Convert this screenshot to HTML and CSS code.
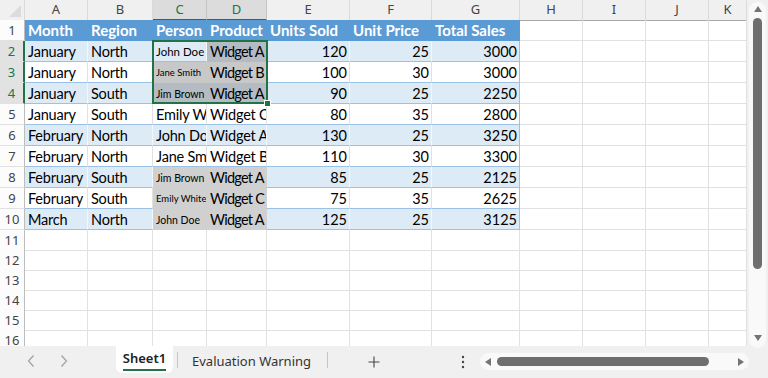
FILE: index.html
```html
<!DOCTYPE html>
<html lang="en">
<head>
    <meta charset="UTF-8">
    <meta name="viewport" content="width=device-width, initial-scale=1.0">
    <title>Sheet1</title>
    <link rel="stylesheet" href="styles.css">
</head>
<body>
    <div class="workbook">
        <div class="main">
            <div class="sheet">
                <div class="row colhead">
                    <div class="corner">
                        <svg width="24" height="19" viewBox="0 0 24 19"><polygon points="21,5 21,17 9,17" fill="#dcdcdc"/></svg>
                    </div>
                    <div class="ch">A</div>
                    <div class="ch">B</div>
                    <div class="ch on">C</div>
                    <div class="ch on">D</div>
                    <div class="ch">E</div>
                    <div class="ch">F</div>
                    <div class="ch">G</div>
                    <div class="ch">H</div>
                    <div class="ch">I</div>
                    <div class="ch">J</div>
                    <div class="ch">K</div>
                </div>

                <div class="row head">
                    <div class="rh">1</div>
                    <div class="cell t">Month</div>
                    <div class="cell t">Region</div>
                    <div class="cell t">Person</div>
                    <div class="cell t">Product</div>
                    <div class="cell t">Units Sold</div>
                    <div class="cell t">Unit Price</div>
                    <div class="cell t last">Total Sales</div>
                    <div class="cell"></div><div class="cell"></div><div class="cell"></div><div class="cell"></div>
                </div>

                <div class="row band">
                    <div class="rh on">2</div>
                    <div class="cell t">January</div>
                    <div class="cell t">North</div>
                    <div class="cell t fs12">John Doe</div>
                    <div class="cell t prod selb">Widget A</div>
                    <div class="cell t num">120</div>
                    <div class="cell t num">25</div>
                    <div class="cell t num last">3000</div>
                    <div class="cell"></div><div class="cell"></div><div class="cell"></div><div class="cell"></div>
                </div>

                <div class="row plain">
                    <div class="rh on">3</div>
                    <div class="cell t">January</div>
                    <div class="cell t">North</div>
                    <div class="cell t selg fs10">Jane Smith</div>
                    <div class="cell t prod selg">Widget B</div>
                    <div class="cell t num">100</div>
                    <div class="cell t num">30</div>
                    <div class="cell t num last">3000</div>
                    <div class="cell"></div><div class="cell"></div><div class="cell"></div><div class="cell"></div>
                </div>

                <div class="row band">
                    <div class="rh on">4</div>
                    <div class="cell t">January</div>
                    <div class="cell t">South</div>
                    <div class="cell t selb fs11">Jim Brown</div>
                    <div class="cell t prod selb">Widget A</div>
                    <div class="cell t num">90</div>
                    <div class="cell t num">25</div>
                    <div class="cell t num last">2250</div>
                    <div class="cell"></div><div class="cell"></div><div class="cell"></div><div class="cell"></div>
                </div>

                <div class="row plain">
                    <div class="rh">5</div>
                    <div class="cell t">January</div>
                    <div class="cell t">South</div>
                    <div class="cell t">Emily White</div>
                    <div class="cell t">Widget C</div>
                    <div class="cell t num">80</div>
                    <div class="cell t num">35</div>
                    <div class="cell t num last">2800</div>
                    <div class="cell"></div><div class="cell"></div><div class="cell"></div><div class="cell"></div>
                </div>

                <div class="row band">
                    <div class="rh">6</div>
                    <div class="cell t">February</div>
                    <div class="cell t">North</div>
                    <div class="cell t">John Doe</div>
                    <div class="cell t">Widget A</div>
                    <div class="cell t num">130</div>
                    <div class="cell t num">25</div>
                    <div class="cell t num last">3250</div>
                    <div class="cell"></div><div class="cell"></div><div class="cell"></div><div class="cell"></div>
                </div>

                <div class="row plain">
                    <div class="rh">7</div>
                    <div class="cell t">February</div>
                    <div class="cell t">North</div>
                    <div class="cell t">Jane Smith</div>
                    <div class="cell t">Widget B</div>
                    <div class="cell t num">110</div>
                    <div class="cell t num">30</div>
                    <div class="cell t num last">3300</div>
                    <div class="cell"></div><div class="cell"></div><div class="cell"></div><div class="cell"></div>
                </div>

                <div class="row band">
                    <div class="rh">8</div>
                    <div class="cell t">February</div>
                    <div class="cell t">South</div>
                    <div class="cell t gray fs11">Jim Brown</div>
                    <div class="cell t prod gray">Widget A</div>
                    <div class="cell t num">85</div>
                    <div class="cell t num">25</div>
                    <div class="cell t num last">2125</div>
                    <div class="cell"></div><div class="cell"></div><div class="cell"></div><div class="cell"></div>
                </div>

                <div class="row plain">
                    <div class="rh">9</div>
                    <div class="cell t">February</div>
                    <div class="cell t">South</div>
                    <div class="cell t gray fs10">Emily White</div>
                    <div class="cell t prod gray">Widget C</div>
                    <div class="cell t num">75</div>
                    <div class="cell t num">35</div>
                    <div class="cell t num last">2625</div>
                    <div class="cell"></div><div class="cell"></div><div class="cell"></div><div class="cell"></div>
                </div>

                <div class="row band">
                    <div class="rh">10</div>
                    <div class="cell t">March</div>
                    <div class="cell t">North</div>
                    <div class="cell t gray fs11">John Doe</div>
                    <div class="cell t prod gray">Widget A</div>
                    <div class="cell t num">125</div>
                    <div class="cell t num">25</div>
                    <div class="cell t num last">3125</div>
                    <div class="cell"></div><div class="cell"></div><div class="cell"></div><div class="cell"></div>
                </div>

                <div class="row empty">
                    <div class="rh">11</div>
                    <div class="cell"></div><div class="cell"></div><div class="cell"></div><div class="cell"></div><div class="cell"></div><div class="cell"></div><div class="cell"></div><div class="cell"></div><div class="cell"></div><div class="cell"></div><div class="cell"></div>
                </div>
                <div class="row empty">
                    <div class="rh">12</div>
                    <div class="cell"></div><div class="cell"></div><div class="cell"></div><div class="cell"></div><div class="cell"></div><div class="cell"></div><div class="cell"></div><div class="cell"></div><div class="cell"></div><div class="cell"></div><div class="cell"></div>
                </div>
                <div class="row empty">
                    <div class="rh">13</div>
                    <div class="cell"></div><div class="cell"></div><div class="cell"></div><div class="cell"></div><div class="cell"></div><div class="cell"></div><div class="cell"></div><div class="cell"></div><div class="cell"></div><div class="cell"></div><div class="cell"></div>
                </div>
                <div class="row empty">
                    <div class="rh">14</div>
                    <div class="cell"></div><div class="cell"></div><div class="cell"></div><div class="cell"></div><div class="cell"></div><div class="cell"></div><div class="cell"></div><div class="cell"></div><div class="cell"></div><div class="cell"></div><div class="cell"></div>
                </div>
                <div class="row empty">
                    <div class="rh">15</div>
                    <div class="cell"></div><div class="cell"></div><div class="cell"></div><div class="cell"></div><div class="cell"></div><div class="cell"></div><div class="cell"></div><div class="cell"></div><div class="cell"></div><div class="cell"></div><div class="cell"></div>
                </div>
                <div class="row empty">
                    <div class="rh">16</div>
                    <div class="cell"></div><div class="cell"></div><div class="cell"></div><div class="cell"></div><div class="cell"></div><div class="cell"></div><div class="cell"></div><div class="cell"></div><div class="cell"></div><div class="cell"></div><div class="cell"></div>
                </div>

                <!-- selected range C2:D4 -->
                <div class="selection"><span class="handle"></span></div>
            </div>

            <div class="vscroll">
                <div class="vtrack">
                    <span class="arrow up"></span>
                    <span class="vthumb"></span>
                    <span class="arrow down"></span>
                </div>
            </div>
        </div>

        <div class="tabbar">
            <div class="nav">
                <svg width="116" height="32" viewBox="0 0 116 32">
                    <polyline points="33.5,9.5 28.5,15 33.5,20.5" fill="none" stroke="#a0a0a0" stroke-width="1.2"/>
                    <polyline points="61.5,9.5 66.5,15 61.5,20.5" fill="none" stroke="#a0a0a0" stroke-width="1.2"/>
                </svg>
            </div>
            <div class="tab active"><span>Sheet1</span></div>
            <div class="sep"></div>
            <div class="tab">Evaluation Warning</div>
            <div class="sep"></div>
            <div class="add">
                <svg width="12" height="12" viewBox="0 0 12 12"><path d="M6 0.5V11.5M0.5 6H11.5" stroke="#444" stroke-width="1.1"/></svg>
            </div>
            <div class="more">
                <svg width="4" height="14" viewBox="0 0 4 14"><circle cx="2" cy="2" r="1.2" fill="#444"/><circle cx="2" cy="7" r="1.2" fill="#444"/><circle cx="2" cy="12" r="1.2" fill="#444"/></svg>
            </div>
            <div class="hscroll">
                <span class="arrow left"></span>
                <span class="hthumb"></span>
                <span class="arrow right"></span>
            </div>
        </div>
    </div>
</body>
</html>
```

FILE: styles.css
```css
body {
    margin: 0;
    background-color: #f0f0f0;
    overflow: hidden;
    font-family: 'Lato', sans-serif;
}
.workbook {
    width: 768px;
    height: 378px;
    display: flex;
    flex-direction: column;
}
.main {
    display: flex;
    height: 346px;
}
.sheet {
    position: relative;
    width: 747px;
    height: 346px;
    overflow: hidden;
    background-color: #fff;
}
.row {
    display: grid;
    grid-template-columns: 25px 63px 65px 54px 60px 83px 82px 88px 63px 63px 63px 38px;
    height: 21px;
}
.row.empty {
    height: 20px;
}
.row.colhead {
    height: 20px;
}
.corner {
    background-color: #f0f0f0;
    border-right: 1px solid #dadada;
    border-bottom: 1px solid #a9a9a9;
    box-sizing: border-box;
}
.corner svg {
    display: block;
}
.ch {
    background-color: #f0f0f0;
    border-right: 1px solid #dadada;
    border-bottom: 1px solid #a9a9a9;
    box-sizing: border-box;
    font-family: 'Noto Sans', sans-serif;
    font-size: 13px;
    line-height: 19px;
    text-align: center;
    color: #444;
}
.ch.on {
    background-color: #dcdcdc;
    color: #217346;
    border-bottom: 2px solid #217346;
    border-right-color: #c4c4c4;
}
.rh {
    background-color: #fcfcfc;
    border-right: 1px solid #bdbdbd;
    border-bottom: 1px solid #e1e1e1;
    box-sizing: border-box;
    font-family: 'Noto Sans', sans-serif;
    font-size: 13px;
    line-height: 20px;
    text-align: center;
    color: #444;
}
.rh.on {
    background-color: #e2e2e2;
    color: #217346;
    border-right: 2px solid #217346;
}
.cell {
    border-right: 1px solid #e1e1e1;
    border-bottom: 1px solid #e1e1e1;
    box-sizing: border-box;
    padding: 0 3px;
    overflow: hidden;
    white-space: nowrap;
    display: flex;
    align-items: flex-end;
    font-size: 14.5px;
    letter-spacing: -0.2px;
    line-height: 18px;
    color: #000;
}
.cell.num {
    justify-content: flex-end;
    padding-right: 2px;
    letter-spacing: 0;
}
.cell.prod {
    letter-spacing: -0.75px;
}
.head .t {
    background-color: #5b9bd5;
    border-color: #5b9bd5;
    color: #fff;
    font-weight: bold;
    font-size: 15px;
    letter-spacing: 0;
    padding-bottom: 1px;
}
.band .t {
    background-color: #ddebf7;
    border-right-color: #f2f7fc;
    border-bottom-color: #9bc2e6;
}
.plain .t {
    border-bottom-color: #9bc2e6;
}
.band .t.last, .plain .t.last {
    border-right-color: #9bc2e6;
}
.row .t.selb {
    background-color: #b5bbc3;
    border-color: #b5bbc3;
}
.row .t.selg {
    background-color: #c8c8c8;
    border-color: #c8c8c8;
}
.row .t.gray {
    background-color: #d0d0d0;
    border-color: #d0d0d0;
}
.cell.fs12 {
    font-size: 11.5px;
    letter-spacing: 0;
}
.cell.fs11 {
    font-size: 10.5px;
    letter-spacing: 0;
}
.cell.fs10 {
    font-size: 9.5px;
    letter-spacing: 0;
}
.selection {
    position: absolute;
    left: 152px;
    top: 40px;
    width: 116px;
    height: 64px;
    border: 2px solid #217346;
    box-sizing: border-box;
}
.handle {
    position: absolute;
    right: -5px;
    bottom: -5px;
    width: 5px;
    height: 5px;
    background-color: #217346;
    border: 1px solid #fff;
}
.vscroll {
    width: 21px;
    background-color: #f0f0f0;
}
.vtrack {
    margin: 2px 2px 0 2px;
    height: 346px;
    border-radius: 9px;
    background-color: #f9f9f9;
    display: flex;
    flex-direction: column;
    align-items: center;
    padding-top: 4px;
    box-sizing: border-box;
}
.arrow {
    width: 0;
    height: 0;
    border: 4px solid transparent;
}
.arrow.up {
    border-top: 0;
    border-bottom: 6px solid #747474;
    margin-bottom: 6px;
}
.arrow.down {
    border-bottom: 0;
    border-top: 6px solid #747474;
    margin-top: auto;
    margin-bottom: 7px;
}
.vthumb {
    width: 9px;
    height: 251px;
    border-radius: 5px;
    background-color: #6e6e6e;
}
.tabbar {
    height: 32px;
    display: flex;
    font-family: 'Noto Sans', sans-serif;
    font-size: 13px;
    color: #333;
}
.nav {
    width: 116px;
}
.nav svg {
    display: block;
}
.tab {
    width: 149px;
    padding-left: 14px;
    box-sizing: border-box;
    line-height: 31px;
}
.tab.active {
    width: 57px;
    height: 27px;
    padding: 3px 0 0;
    background-color: #fff;
    border-radius: 0 0 6px 6px;
    display: flex;
    flex-direction: column;
    align-items: center;
    line-height: 18px;
    font-weight: 600;
    color: #222;
}
.tab.active span {
    border-bottom: 2px solid #217346;
    padding-bottom: 2px;
}
.sep {
    width: 1px;
    height: 16px;
    margin-top: 6px;
    background-color: #c6c6c6;
}
.tab.active + .sep {
    margin-left: 4px;
}
.add {
    width: 92px;
    display: flex;
    justify-content: center;
    padding-top: 10px;
    box-sizing: border-box;
}
.add svg, .more svg {
    display: block;
}
.more {
    width: 60px;
    display: flex;
    justify-content: flex-end;
    padding: 9px 15px 0 0;
    box-sizing: border-box;
}
.hscroll {
    width: 269px;
    height: 17px;
    margin-top: 7px;
    border-radius: 9px;
    background-color: #f9f9f9;
    display: flex;
    align-items: center;
    padding: 0 5px;
    box-sizing: border-box;
}
.arrow.left {
    border-left: 0;
    border-right: 6px solid #747474;
}
.arrow.right {
    border-right: 0;
    border-left: 6px solid #747474;
    margin-left: auto;
}
.hthumb {
    width: 212px;
    height: 9px;
    margin-left: 6px;
    border-radius: 5px;
    background-color: #6e6e6e;
}
```
